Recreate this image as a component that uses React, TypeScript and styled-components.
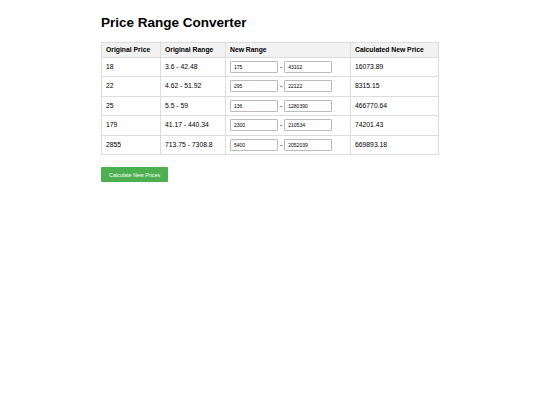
import styled, { createGlobalStyle } from "styled-components";

const rows = [
  { price: "18", range: "3.6 - 42.48", min: "175", max: "43102", result: "16073.89" },
  { price: "22", range: "4.62 - 51.92", min: "295", max: "22122", result: "8315.15" },
  { price: "25", range: "5.5 - 59", min: "136", max: "1280390", result: "466770.64" },
  { price: "179", range: "41.17 - 440.34", min: "2300", max: "210534", result: "74201.43" },
  { price: "2855", range: "713.75 - 7308.8", min: "5400", max: "2052039", result: "669893.18" },
];

export default function App() {
  return (
    <>
      <GlobalStyle />
      <Page>
        <Title>Price Range Converter</Title>
        <Table>
          <colgroup>
            <col style={{ width: 59 }} />
            <col style={{ width: 65 }} />
            <col style={{ width: 125 }} />
            <col style={{ width: 88 }} />
          </colgroup>
          <thead>
            <tr>
              <Th>Original Price</Th>
              <Th>Original Range</Th>
              <Th>New Range</Th>
              <Th>Calculated New Price</Th>
            </tr>
          </thead>
          <tbody>
            {rows.map((r) => (
              <tr key={r.price}>
                <Td>{r.price}</Td>
                <Td>{r.range}</Td>
                <Td>
                  <RangeBox>
                    <RangeInput defaultValue={r.min} />
                    <Dash>-</Dash>
                    <RangeInput defaultValue={r.max} />
                  </RangeBox>
                </Td>
                <Td>{r.result}</Td>
              </tr>
            ))}
          </tbody>
        </Table>
        <Button>Calculate New Prices</Button>
      </Page>
    </>
  );
}

const GlobalStyle = createGlobalStyle`
  body {
    margin: 0;
    background: #fff;
    font-family: "Liberation Sans", Arial, sans-serif;
    color: #000;
  }
`;

const Page = styled.div`
  width: 338px;
  margin: 0 auto;
  padding-top: 15px;
`;

const Title = styled.h1`
  font-size: 13.5px;
  font-weight: bold;
  margin: 0 0 11px;
  line-height: 16px;
`;

const Table = styled.table`
  width: 100%;
  border-collapse: collapse;
  table-layout: fixed;
`;

const Th = styled.th`
  background: #f2f2f2;
  border: 1px solid #ddd;
  padding: 3px 4px;
  text-align: left;
  font-size: 6.8px;
  font-weight: bold;
  line-height: 7.5px;
`;

const Td = styled.td`
  border: 1px solid #ddd;
  padding: 3.25px 4px;
  text-align: left;
  font-size: 6.8px;
  line-height: 12px;
  white-space: nowrap;
`;

const RangeBox = styled.div`
  display: flex;
  align-items: center;
  height: 12px;
`;

const RangeInput = styled.input`
  box-sizing: border-box;
  width: 48px;
  height: 12px;
  padding: 0 3px;
  border: 1px solid #bbb;
  border-radius: 1px;
  font-family: "Liberation Sans", Arial, sans-serif;
  font-size: 5px;
  color: #000;
  outline: none;
`;

const Dash = styled.span`
  margin: 0 2px;
  font-size: 6.8px;
`;

const Button = styled.button`
  display: block;
  margin-top: 12px;
  background: #4caf50;
  color: #fff;
  border: none;
  border-radius: 1px;
  padding: 0 8px;
  height: 15px;
  font-family: "Liberation Sans", Arial, sans-serif;
  font-size: 5.4px;
  cursor: pointer;
`;
